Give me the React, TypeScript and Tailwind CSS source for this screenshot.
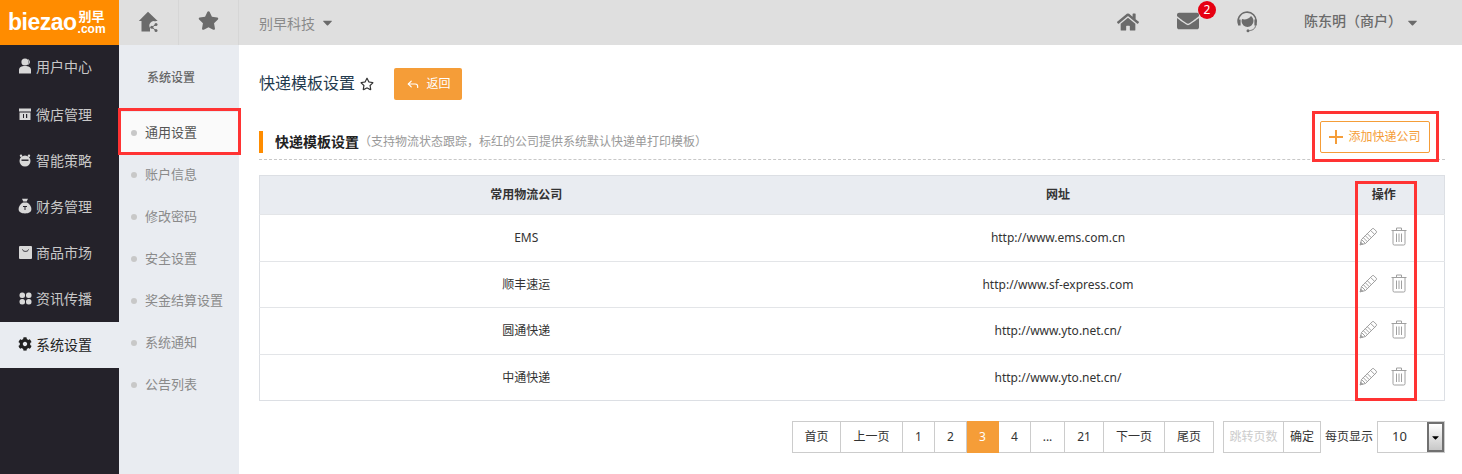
import React from "react";
import { FaHome, FaStar, FaEnvelope, FaCaretDown, FaRegStar, FaCog } from "react-icons/fa";
import { Reply } from "lucide-react";

const font = "[font-family:'Noto_Sans','Noto_Sans_CJK_SC',sans-serif] [text-spacing-trim:space-all]";

const UserIcon = () => (
  <svg width="14" height="16" viewBox="0 0 14 16" fill="#d8d8d8"><circle cx="7" cy="4" r="3.600" /><path d="M1 15.500V12c0-2.600 2.400-4 6-4s6 1.400 6 4v3.500z" /><path d="M10.500 1.500a4 4 0 0 1 0 5" stroke="#d8d8d8" fill="none" /></svg>
);
const StoreIcon = () => (
  <svg width="14" height="14" viewBox="0 0 14 14" fill="#d8d8d8"><path d="M1 1.500h12v3H1z" /><path d="M1.500 5.500h11V13h-11z" /><path d="M5 7h1v4H5zM8 7h1.200v4H8z" fill="#24222a" /></svg>
);
const BotIcon = () => (
  <svg width="14" height="14" viewBox="0 0 14 14" fill="#d8d8d8"><circle cx="7" cy="8" r="5.500" /><circle cx="3" cy="2.800" r="1.200" /><circle cx="11" cy="2.800" r="1.200" /><path d="M3.500 6.500h7v1.400h-7z" fill="#24222a" /></svg>
);
const BagIcon = () => (
  <svg width="14" height="16" viewBox="0 0 14 16" fill="#d8d8d8"><path d="M4 .8h6L8.700 3.600H5.300z" /><path d="M5 4.400h4c2.800 1.600 4.400 4 4.400 6.600 0 3-2.400 4.400-6.400 4.400S.6 14 .6 11C.6 8.400 2.200 6 5 4.400z" /><path d="M5 8h4v1H7.500v3H6.500V9H5z" fill="#24222a" /></svg>
);
const ShopIcon = () => (
  <svg width="13" height="13" viewBox="0 0 13 13"><rect width="13" height="13" rx="1" fill="#d8d8d8" /><path d="M3.500 3.500c.5 2.500 5.500 2.500 6 0" stroke="#24222a" fill="none" /></svg>
);
const PetalIcon = () => (
  <svg width="13" height="13" viewBox="0 0 13 13" fill="#d8d8d8"><rect x=".5" y=".5" width="5.500" height="5.500" rx="2.500" /><rect x="7" y=".5" width="5.500" height="5.500" rx="2.500" /><rect x=".5" y="7" width="5.500" height="5.500" rx="2.500" /><rect x="7" y="7" width="5.500" height="5.500" rx="2.500" /></svg>
);
const HomeShare = () => (
  <svg width="22" height="22" viewBox="0 0 22 22" fill="#6b6b6b">
    <path d="M10 .8 .8 10h2.700v10.500h8.500v-3.500a4.500 4.500 0 0 1 5.500-6.500V10h2.200z" />
    <circle cx="18" cy="13.500" r="1.500" /><circle cx="13.800" cy="16.300" r="1.500" /><circle cx="18" cy="19.500" r="1.500" />
    <path d="M18 13.500l-4.200 2.800 4.200 3.200" stroke="#6b6b6b" fill="none" />
  </svg>
);
const Headset = () => (
  <svg width="21" height="23" viewBox="0 0 21 23" fill="none">
    <path d="M2 15A9 9 0 1 1 19 12.500" stroke="#6b6b6b" strokeWidth="1.600" />
    <path d="M5 9c3 1 7 0 9-3 1.500 1 2.500 3 2.500 5a6 6 0 0 1-12 0z" fill="#6b6b6b" />
    <path d="M1.200 9.500h2.400v6H1.200zM17.400 9.500h2.400v6h-2.400z" fill="#6b6b6b" />
    <path d="M18.500 15.500c0 3-3 5-6 5" stroke="#6b6b6b" />
    <circle cx="11" cy="20.800" r="1.500" fill="#6b6b6b" />
  </svg>
);
const Pencil = () => (
  <svg width="19" height="19" viewBox="0 0 19 19" fill="none" stroke="#a0a0a0" strokeWidth="1">
    <path d="M1.200 17.800l1.300-5.300L13.200 1.800a1.200 1.200 0 0 1 1.700 0l2.300 2.300a1.200 1.200 0 0 1 0 1.700L6.500 16.500z" />
    <path d="M2.500 12.500l4 4M4.300 10.700l4 4M6.300 8.700l4 4M8.300 6.700l4 4M11.600 3.400l4 4" />
    <path d="M1.200 17.800l.6-2.600 2 2z" fill="#a0a0a0" />
  </svg>
);
const Trash = () => (
  <svg width="16" height="19" viewBox="0 0 16 19" fill="none" stroke="#a0a0a0" strokeWidth="1">
    <path d="M.5 3.500h15M5.500 3.500V1h5v2.500" />
    <path d="M2 3.500v13.200a1.300 1.300 0 0 0 1.300 1.300h9.400a1.300 1.300 0 0 0 1.300-1.300V3.500" />
    <path d="M5.500 6.500v8.500M8 6.500v8.500M10.500 6.500v8.500" />
  </svg>
);
const PlusMark = () => (
  <svg width="14" height="14" viewBox="0 0 14 14" fill="#f59d38"><path d="M6 0h2v14H6z" /><path d="M0 6h14v2H0z" /></svg>
);

const mainMenu: [string, React.ReactNode][] = [
  ["用户中心", <UserIcon />],
  ["微店管理", <StoreIcon />],
  ["智能策略", <BotIcon />],
  ["财务管理", <BagIcon />],
  ["商品市场", <ShopIcon />],
  ["资讯传播", <PetalIcon />],
  ["系统设置", <FaCog size={14} />],
];
const subMenu = ["通用设置", "账户信息", "修改密码", "安全设置", "奖金结算设置", "系统通知", "公告列表"];
const rows = [
  ["EMS", "http://www.ems.com.cn"],
  ["顺丰速运", "http://www.sf-express.com"],
  ["圆通快递", "http://www.yto.net.cn/"],
  ["中通快递", "http://www.yto.net.cn/"],
];
const pages: [string, string][] = [
  ["首页", "w-[49px]"], ["上一页", "w-[62px]"], ["1", "w-[32px]"], ["2", "w-[32px]"], ["3", "w-[32px]"],
  ["4", "w-[32px]"], ["...", "w-[34px]"], ["21", "w-[39px]"], ["下一页", "w-[61px]"], ["尾页", "w-[49px]"],
];

export default function App() {
  return (
    <div className={`relative flex h-[474px] w-[1462px] flex-col overflow-hidden bg-white text-[13px] text-[#333] ${font}`}>
      <header className="flex h-[45px] shrink-0 bg-[#dfdfdf]">
        <div className="flex w-[119px] shrink-0 items-center bg-[#ff8c00] pl-[8px] text-white">
          <span className="text-[23px] font-bold leading-none tracking-[-0.5px] [font-family:'Liberation_Sans',sans-serif]">biezao</span>
          <span className="ml-[1px] flex flex-col items-center text-[12px] font-bold leading-[13px]">
            <span className="h-[13px] text-[13px] leading-[13px]">别早</span>
            <span className="[font-family:'Liberation_Sans',sans-serif]">.com</span>
          </span>
        </div>
        <div className="flex w-[60px] items-center justify-center border-r border-[#d6d6d6] pb-[2px]"><HomeShare /></div>
        <div className="flex w-[60px] items-center justify-center border-r border-[#d6d6d6] pb-[4px] text-[#6b6b6b]"><FaStar size={21} /></div>
        <div className="flex items-center gap-[5px] pl-[20px] pt-[2px] text-[14px] text-[#8a8a8a]">别早科技<FaCaretDown size={15} className="mb-[3px] text-[#6b6b6b]" /></div>
        <div className="ml-auto flex items-center pr-[42px] text-[#6b6b6b]">
          <FaHome size={22} className="mr-[38px] mb-[2px]" />
          <div className="relative mr-[38px] mb-[3px]">
            <FaEnvelope size={22} />
            <span className="absolute -right-[17px] -top-[9px] flex h-[18px] w-[18px] items-center justify-center rounded-full bg-[#e60012] text-[12px] text-white">2</span>
          </div>
          <span className="mr-[46px] mb-[2px]"><Headset /></span>
          <span className="mb-[4px] text-[14px] font-medium">陈东明（商户）</span>
          <FaCaretDown size={15} className="mb-[1px] ml-[3px]" />
        </div>
      </header>
      <div className="flex min-h-0 flex-1">
        <aside className="w-[119px] shrink-0 bg-[#24222a] pt-[1px]">
          {mainMenu.map(([label, icon], i) => {
            const active = i === 6;
            return (
              <div key={label} className={`flex h-[46px] items-center gap-[4px] pl-[18px] text-[14px] ${i === 0 ? "pb-[6px]" : "pb-[2px]"} ${active ? "bg-[#e9ecf1] text-[#222]" : "text-[#c8c8c8]"}`}>
                <span className={`flex w-[14px] justify-center ${active ? "text-[#222]" : "text-[#d8d8d8]"}`}>{icon}</span>
                {label}
              </div>
            );
          })}
        </aside>
        <nav className="w-[120px] shrink-0 bg-[#e9ecf1]">
          <div className="flex h-[67px] items-center pb-[2px] pl-[28px] text-[12px] font-medium text-[#666]">系统设置</div>
          {subMenu.map((label, i) => (
            <div key={label} className={`flex h-[42px] items-center gap-[8px] pl-[12px] ${i === 0 ? "bg-[#fafafa] text-[#555]" : "text-[#8a8a8a]"}`}>
              <span className="h-[6px] w-[6px] rounded-full bg-[#c8c8c8]" />
              {label}
            </div>
          ))}
        </nav>
        <main className="min-w-0 flex-1 pl-[20px] pr-[17px]">
          <div className="mt-[23px] flex h-[32px] items-center">
            <h1 className="pb-[3px] text-[16px] font-normal text-[#1f3a4d]">快递模板设置</h1>
            <FaRegStar size={14} className="ml-[5px] text-[#333]" />
            <button className="ml-[20px] flex h-[32px] w-[68px] items-center justify-center gap-[7px] rounded-[2px] bg-[#f59d38] text-[12px] text-white">
              <Reply size={14} strokeWidth={2} />返回
            </button>
          </div>
          <div className="mt-[21px] flex h-[39px] items-start justify-between border-b border-dashed border-[#c8c8c8] pr-[15px]">
            <div className="mt-[10px] flex h-[22px] items-center border-l-[4px] border-[#ff8c00] pb-[1px] pl-[12px]">
              <span className="text-[14px] font-bold text-[#222]">快递模板设置</span>
              <span className="text-[12px] text-[#999]">（支持物流状态跟踪，标红的公司提供系统默认快递单打印模板）</span>
            </div>
            <button className="flex h-[32px] w-[110px] items-center justify-center gap-[5px] rounded-[2px] border border-[#f59d38] text-[12px] text-[#f59d38]">
              <PlusMark />添加快递公司
            </button>
          </div>
          <table className="mt-[15px] w-[1186px] table-fixed border-collapse border border-[#dcdfe4] text-center">
            <colgroup><col className="w-[533px]" /><col className="w-[531px]" /><col /></colgroup>
            <thead>
              <tr className="h-[39px] bg-[#e9ecf1] text-[12px] font-bold text-[#333]">
                <th>常用物流公司</th><th>网址</th><th>操作</th>
              </tr>
            </thead>
            <tbody>
              {rows.map(([name, url]) => (
                <tr key={name} className="h-[46.500px] border-t border-[#e3e5e8] text-[12px]">
                  <td className="pt-[1px]">{name}</td>
                  <td className="pt-[1px]">{url}</td>
                  <td>
                    <div className="flex items-center justify-center gap-[13px] pb-[2px] pr-[1px]"><Pencil /><Trash /></div>
                  </td>
                </tr>
              ))}
            </tbody>
          </table>
          <div className="mt-[20px] flex h-[32px] text-[12px]">
            <div className="ml-[533px] flex">
              {pages.map(([p, w], i) => (
                <div key={p} className={`flex h-[32px] items-center justify-center border-y border-r border-[#ccc] ${w} ${i === 0 ? "border-l" : ""} ${p === "3" ? "border-[#f59d38] bg-[#f59d38] text-white" : ""}`}>{p}</div>
              ))}
            </div>
            <div className="ml-[9px] flex h-[32px] w-[61px] items-center justify-center border border-[#ccc] text-[#ccc]">跳转页数</div>
            <div className="flex h-[32px] w-[37px] items-center justify-center border-y border-r border-[#ccc]">确定</div>
            <div className="flex w-[56px] items-center justify-center">每页显示</div>
            <div className="flex h-[32px] w-[68px] items-center justify-between border border-[#ccc] pl-[14px] text-[13px]">
              10
              <span className="flex h-[30px] w-[17px] items-center justify-center border-2 border-[#707070] bg-gradient-to-b from-white to-[#c8c8c8]"><FaCaretDown size={11} className="text-black" /></span>
            </div>
          </div>
        </main>
      </div>
      <div className="absolute left-[118px] top-[108px] h-[47px] w-[123px] border-[3px] border-[#ff3333]" />
      <div className="absolute left-[1312px] top-[111px] h-[51px] w-[127px] border-[3px] border-[#ff3333]" />
      <div className="absolute left-[1355px] top-[181px] h-[220px] w-[62px] border-[3px] border-[#ff3333]" />
    </div>
  );
}
